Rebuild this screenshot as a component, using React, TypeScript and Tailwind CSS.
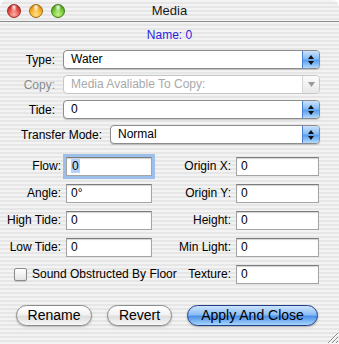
import React from 'react';

const stripes =
  'bg-[repeating-linear-gradient(180deg,#f3f3f3_0px,#f3f3f3_2px,#e6e6e6_2px,#e6e6e6_4px)]';

function Light({ tone }: { tone: 'red' | 'amber' | 'green' }) {
  const fill = {
    red: 'border-[#9b2a22] bg-[radial-gradient(ellipse_at_50%_18%,rgba(255,255,255,0.95)_0%,rgba(255,255,255,0)_38%),radial-gradient(circle_at_50%_78%,#ffb3a6_0%,#e0463f_55%,#a3170f_100%)]',
    amber: 'border-[#a06a10] bg-[radial-gradient(ellipse_at_50%_18%,rgba(255,255,255,0.95)_0%,rgba(255,255,255,0)_38%),radial-gradient(circle_at_50%_78%,#ffe28a_0%,#f2a820_55%,#b36a05_100%)]',
    green: 'border-[#3d7a14] bg-[radial-gradient(ellipse_at_50%_18%,rgba(255,255,255,0.95)_0%,rgba(255,255,255,0)_38%),radial-gradient(circle_at_50%_78%,#c8f58a_0%,#6cc22e_55%,#2f7a0c_100%)]',
  }[tone];
  return <span className={`h-[14px] w-[14px] rounded-full border ${fill}`} />;
}

function Popup({ value, disabled }: { value: string; disabled?: boolean }) {
  return (
    <div
      className={`flex h-[19px] flex-1 items-stretch overflow-hidden rounded-[4px] border bg-white ${
        disabled ? 'border-[#c6c6c6]' : 'border-[#8c8c8c] shadow-[0_1px_1px_rgba(0,0,0,0.18)]'
      }`}
    >
      <span className={`flex-1 pl-[7px] leading-[17px] ${disabled ? 'text-[#a9a9a9]' : 'text-black'}`}>{value}</span>
      {disabled ? (
        <span className="flex w-[17px] items-center justify-center border-l border-[#d6d6d6] bg-[linear-gradient(#fbfbfb,#e8e8e8)]">
          <svg width="7" height="5" viewBox="0 0 7 5">
            <path d="M0 0H7L3.5 5Z" fill="#9a9a9a" />
          </svg>
        </span>
      ) : (
        <span className="flex w-[17px] flex-col items-center justify-center gap-[2px] border-l border-[#4a7fcf] bg-[linear-gradient(#c9e2fc_0%,#86bdf4_45%,#5a9eec_55%,#b2dafd_100%)]">
          <svg width="6" height="4" viewBox="0 0 6 4">
            <path d="M3 0L6 4H0Z" fill="#111" />
          </svg>
          <svg width="6" height="4" viewBox="0 0 6 4">
            <path d="M0 0H6L3 4Z" fill="#111" />
          </svg>
        </span>
      )}
    </div>
  );
}

function Field({ value, focused }: { value: string; focused?: boolean }) {
  return (
    <div
      className={`h-[19px] border border-[#a4a4a4] border-t-[#7c7c7c] bg-white pl-[4px] leading-[17px] shadow-[inset_0_1px_1px_rgba(0,0,0,0.18)] ${
        focused ? 'outline outline-[3px] outline-[#9cc0ea]' : ''
      }`}
    >
      {focused ? <span className="bg-[#b6d4fb] px-[1px]">{value}</span> : value}
    </div>
  );
}

function Label({ children }: { children: React.ReactNode }) {
  return <span className="pr-[5px] text-right leading-[19px] whitespace-nowrap">{children}</span>;
}

export default function App() {
  return (
    <div className="h-[344px] w-[339px] overflow-hidden bg-white font-['Liberation_Sans',Arial,sans-serif] text-[12px] text-black">
      <div className="relative flex h-full flex-col overflow-hidden rounded-t-[7px]">
        {/* title bar */}
        <div
          className={`grid h-[22px] shrink-0 grid-cols-[1fr_auto_1fr] items-center border-b border-[#8d8d8d] ${stripes}`}
        >
          <div className="flex items-center gap-[8px] pl-[7px]">
            <Light tone="red" />
            <Light tone="amber" />
            <Light tone="green" />
          </div>
          <span className="text-[13px] text-[#1a1a1a]">Media</span>
          <span />
        </div>

        <div className={`flex flex-1 flex-col pt-[6px] ${stripes}`}>
          <div className="h-[14px] text-center leading-[14px] text-[#2a1fe0]">Name: 0</div>

          <div className="mt-[8px] flex flex-col gap-[6px] pr-[19px]">
            <div className="flex items-center">
              <span className="w-[63px] pr-[8px] text-right">Type:</span>
              <Popup value="Water" />
            </div>
            <div className="flex items-center">
              <span className="w-[63px] pr-[8px] text-right text-[#8a8a8a]">Copy:</span>
              <Popup value="Media Avaliable To Copy:" disabled />
            </div>
            <div className="flex items-center">
              <span className="w-[63px] pr-[8px] text-right">Tide:</span>
              <Popup value="0" />
            </div>
            <div className="flex items-center">
              <span className="w-[110px] pr-[8px] text-right whitespace-nowrap">Transfer Mode:</span>
              <Popup value="Normal" />
            </div>
          </div>

          <div className="mt-[13px] grid grid-cols-[66px_86px_84px_83px] gap-y-[8px]">
            <Label>Flow:</Label>
            <Field value="0" focused />
            <Label>Origin X:</Label>
            <Field value="0" />

            <Label>Angle:</Label>
            <Field value="0°" />
            <Label>Origin Y:</Label>
            <Field value="0" />

            <Label>High Tide:</Label>
            <Field value="0" />
            <Label>Height:</Label>
            <Field value="0" />

            <Label>Low Tide:</Label>
            <Field value="0" />
            <Label>Min Light:</Label>
            <Field value="0" />

            <div className="col-span-2 flex items-center gap-[5px] pl-[14px] whitespace-nowrap">
              <span className="h-[13px] w-[13px] shrink-0 rounded-[2px] border border-[#8a8a8a] bg-[linear-gradient(#ffffff,#e4e4e4)] shadow-[0_1px_1px_rgba(0,0,0,0.15)]" />
              <span className="leading-[19px]">Sound Obstructed By Floor</span>
            </div>
            <Label>Texture:</Label>
            <Field value="0" />
          </div>

          <div className="mt-[21px] flex items-center gap-[15px] pl-[16px] text-[14px]">
            <button className="h-[21px] w-[76px] rounded-full border border-[#8a8a8a] bg-[linear-gradient(#ffffff_0%,#f2f2f2_45%,#dedede_55%,#f7f7f7_100%)] leading-[19px] shadow-[0_1px_2px_rgba(0,0,0,0.25)]">
              Rename
            </button>
            <button className="h-[21px] w-[65px] rounded-full border border-[#8a8a8a] bg-[linear-gradient(#ffffff_0%,#f2f2f2_45%,#dedede_55%,#f7f7f7_100%)] leading-[19px] shadow-[0_1px_2px_rgba(0,0,0,0.25)]">
              Revert
            </button>
            <button className="h-[21px] w-[131px] rounded-full border border-[#1f3f86] bg-[linear-gradient(#cde3fc_0%,#8abff5_45%,#4f91e8_55%,#a4d6fe_100%)] leading-[19px] shadow-[0_1px_2px_rgba(0,0,0,0.3)]">
              Apply And Close
            </button>
          </div>
        </div>

        <svg className="absolute right-0 bottom-0" width="14" height="14" viewBox="0 0 14 14">
          <path d="M3 13L13 3M7 13L13 7M11 13L13 11" stroke="#8c8c8c" strokeWidth="1" />
          <path d="M4 13L13 4M8 13L13 8M12 13L13 12" stroke="#ffffff" strokeWidth="1" />
        </svg>
      </div>
    </div>
  );
}
